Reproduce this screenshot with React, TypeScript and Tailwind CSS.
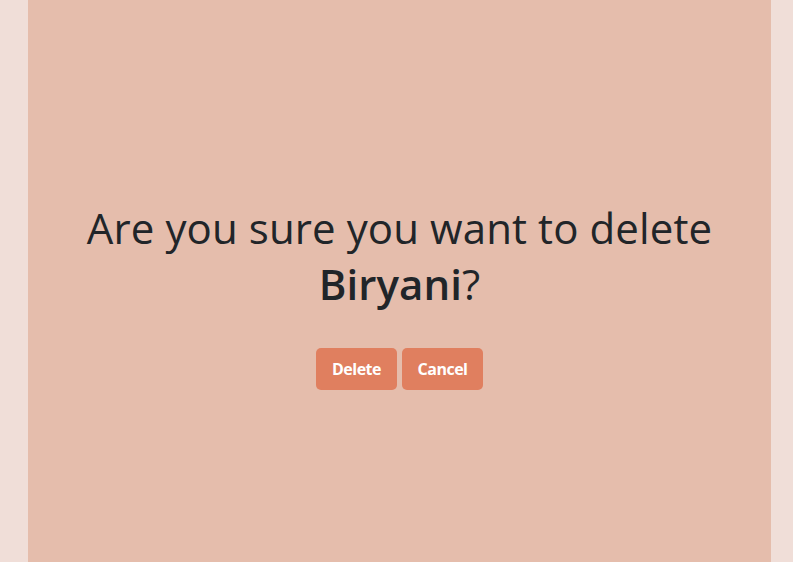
import React from "react";

export default function App() {
  return (
    <div className="flex h-[562px] w-full bg-[#f0ded8]" style={{ fontFamily: '"Open Sans", "Noto Sans", sans-serif' }}>
      <div className="ml-[28px] mr-[22px] flex flex-1 flex-col items-center justify-center bg-[#e5bdac] pt-[27px]">
        <h1 className="text-center text-[42px] leading-[56px] font-normal text-[#212529] tracking-[0.1px]">
          Are you sure you want to delete
          <br />
          <span className="font-semibold">Biryani</span>?
        </h1>
        <div className="mt-[36px] flex gap-[5px]">
          <button className="h-[42px] w-[81px] rounded-[5px] bg-[#e07f5f] text-[16px] font-bold text-white tracking-[-0.5px]">
            Delete
          </button>
          <button className="h-[42px] w-[81px] rounded-[5px] bg-[#e07f5f] text-[16px] font-bold text-white tracking-[-0.5px]">
            Cancel
          </button>
        </div>
      </div>
    </div>
  );
}
